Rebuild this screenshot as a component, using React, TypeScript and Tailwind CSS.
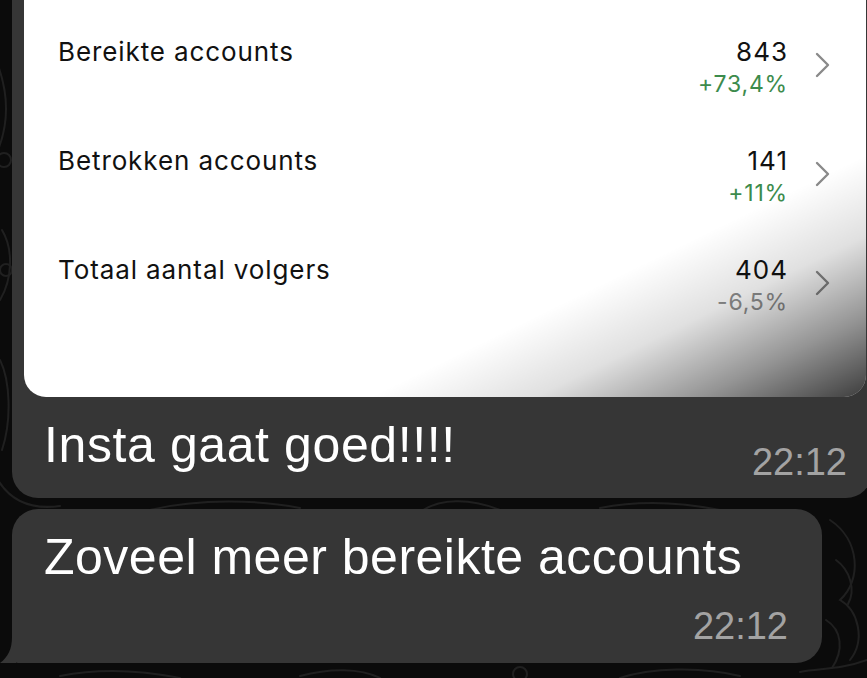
import React from "react";

const rows = [
  { label: "Bereikte accounts", value: "843", delta: "+73,4%", up: true },
  { label: "Betrokken accounts", value: "141", delta: "+11%", up: true },
  { label: "Totaal aantal volgers", value: "404", delta: "-6,5%", up: false },
];

function Chevron() {
  return (
    <svg width="15" height="26" viewBox="0 0 15 26" fill="none">
      <path d="M2 2L13 13L2 24" stroke="#8a8a8a" strokeWidth="2.4" strokeLinecap="round" strokeLinejoin="round" />
    </svg>
  );
}

function Doodles() {
  return (
    <svg className="absolute inset-0" width="867" height="678" viewBox="0 0 867 678" fill="none">
      <g stroke="#202020" strokeWidth="2" strokeLinecap="round">
        <path d="M-4 60 C8 90 10 120 -2 150" />
        <circle cx="4" cy="160" r="7" />
        <path d="M2 230 C14 250 12 280 0 300" />
        <circle cx="6" cy="270" r="6" />
        <path d="M0 360 C10 380 12 420 2 450" />
        <path d="M-2 480 C10 500 30 510 60 506" />
        <path d="M150 510 C200 498 260 500 300 508" />
        <path d="M420 512 C440 498 470 498 500 510" />
        <path d="M600 508 C640 500 680 502 720 510" />
        <path d="M830 520 C860 540 862 580 840 600 C858 610 866 640 850 660" />
        <path d="M836 560 C850 570 856 590 848 604" />
        <path d="M826 620 C842 630 844 650 832 668" />
        <path d="M60 676 C100 668 140 670 180 678" />
        <path d="M300 676 C330 668 360 668 380 678" />
        <circle cx="520" cy="674" r="7" />
        <path d="M620 678 C650 668 700 666 740 676" />
        <path d="M800 672 C820 668 840 670 867 660" />
      </g>
    </svg>
  );
}

export default function App() {
  return (
    <div className="relative w-[867px] h-[678px] overflow-hidden bg-[#0b0b0b] font-['Liberation_Sans',Arial,sans-serif]">
      <Doodles />

      <div className="relative flex flex-col">
        {/* First bubble with screenshot card */}
        <div className="ml-[12px] w-[860px] pl-[12px] pr-[6px] bg-[#363636] rounded-b-[26px]">
          <div className="relative h-[397px] bg-white rounded-b-[22px] overflow-hidden pt-[36px] pl-[34px] pr-[36px] font-['Inter',sans-serif]">
            {rows.map((r) => (
              <div key={r.label} className="flex h-[109px]">
                <div className="flex-1 text-[26px] leading-[31px] text-[#111] tracking-[0.9px]">{r.label}</div>
                <div className="flex flex-col items-end">
                  <div className="text-[26px] leading-[31px] text-[#111] tracking-[1px]">{r.value}</div>
                  <div
                    className={
                      r.up
                        ? "mt-[3px] text-[23px] leading-[28px] text-[#3c8b4c] tracking-[0.8px]"
                        : "mt-[3px] text-[23px] leading-[28px] text-[#8e8e8e] tracking-[0.8px]"
                    }
                  >
                    {r.delta}
                  </div>
                </div>
                <div className="ml-[27px] mt-[16px]">
                  <Chevron />
                </div>
              </div>
            ))}
            <div className="absolute inset-0 bg-[linear-gradient(154deg,rgba(0,0,0,0)_70%,rgba(0,0,0,0.12)_80%,rgba(0,0,0,0.42)_90%,rgba(0,0,0,0.76)_100%)]" />
          </div>
          <div className="flex items-start justify-between pl-[20px] pr-[19px] pt-[20px] pb-[14px]">
            <div className="text-[50px] leading-[56px] tracking-[0.6px] text-white">Insta gaat goed!!!!</div>
            <div className="mt-[23px] text-[38px] leading-[44px] text-[#a3a3a3]">22:12</div>
          </div>
        </div>

        {/* Second bubble */}
        <div className="relative mt-[11px] ml-[12px] w-[810px] bg-[#363636] rounded-[26px] rounded-bl-[6px] pl-[32px] pr-[34px] pt-[20px] pb-[15px] flex flex-col">
          <div className="text-[50px] leading-[56px] tracking-[0.5px] text-white">Zoveel meer bereikte accounts</div>
          <div className="self-end mt-[19px] text-[38px] leading-[44px] text-[#a3a3a3]">22:12</div>
          <svg className="absolute left-[-12px] bottom-0" width="16" height="26" viewBox="0 0 16 26" fill="none">
            <path d="M12 0 C12 12 8 20 0 26 L16 26 L16 0 Z" fill="#363636" />
          </svg>
        </div>
      </div>
    </div>
  );
}
